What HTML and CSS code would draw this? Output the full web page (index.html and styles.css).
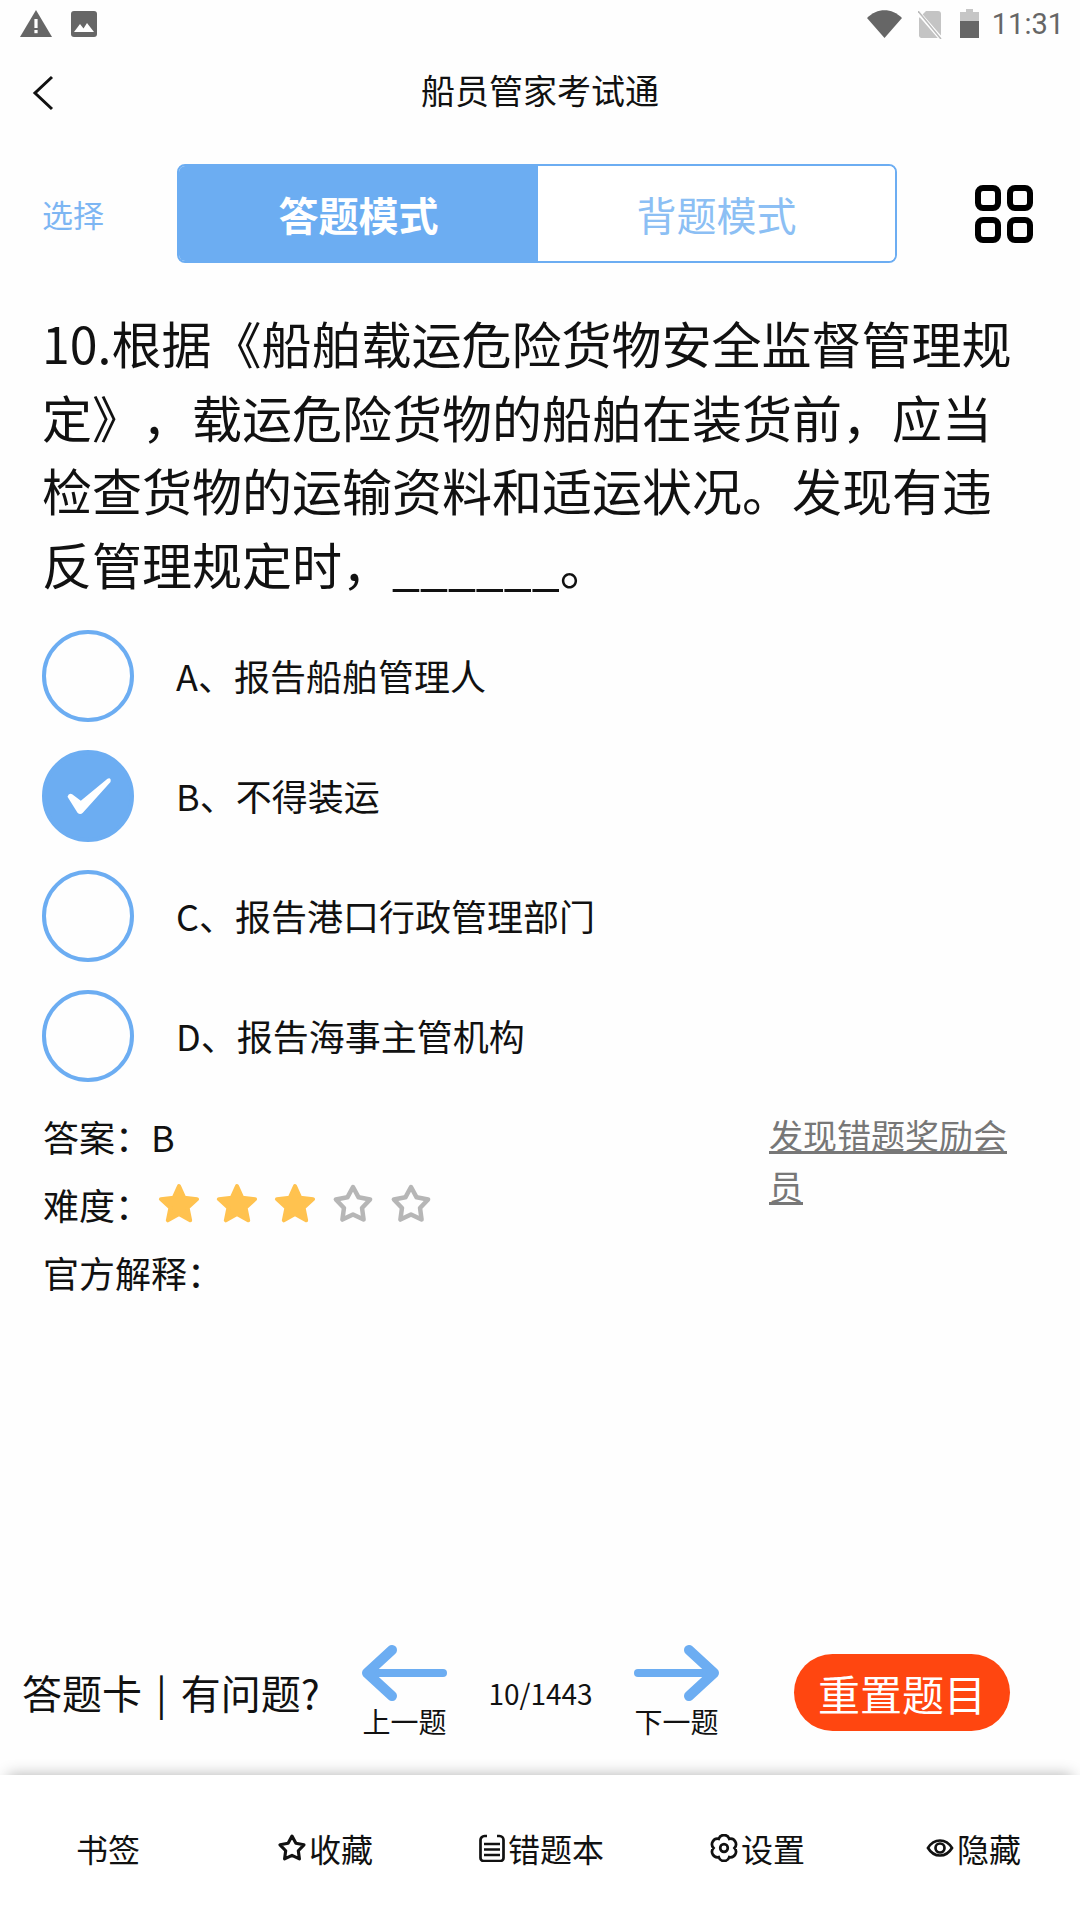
FILE: index.html
```html
<!DOCTYPE html>
<html lang="zh-CN">
<head>
<meta charset="utf-8">
<title>船员管家考试通</title>
<link rel="stylesheet" href="styles.css">
</head>
<body>
<div class="page">
  <div class="status">
    <div class="status-left">
      <svg class="ic-warn" viewBox="0 0 32 27"><path fill="#666" d="M16 0 32 27H0Z"/><rect x="14.4" y="9" width="3.2" height="9" fill="#fff"/><rect x="14.4" y="20" width="3.2" height="3.2" fill="#fff"/></svg>
      <svg class="ic-img" viewBox="0 0 26 26"><rect width="26" height="26" rx="3" fill="#666"/><path fill="#fff" d="M3 21 9 13l3.5 4.5L16 12l7 9Z"/></svg>
    </div>
    <div class="status-right">
      <svg class="ic-wifi" viewBox="0 0 35 28"><path fill="#666" d="M0 8C10-2.500 25-2.500 35 8L17.500 28Z"/></svg>
      <svg class="ic-sim" viewBox="0 0 24 28"><path fill="#c4c4c4" d="M8 0h12a3 3 0 0 1 3 3v22l-2 2H3a3 3 0 0 1-2-2V7Z"/><path stroke="#fff" stroke-width="4" d="M-1 0 25 30"/><path stroke="#bbb" stroke-width="1.500" d="M0 0 23 28"/></svg>
      <svg class="ic-bat" viewBox="0 0 19 29"><path fill="#c6c6c6" d="M6 0h7v3h6v9H0V3h6Z"/><rect y="12" width="19" height="17" fill="#666"/></svg>
      <span class="time">11:31</span>
    </div>
  </div>

  <header class="nav">
    <svg class="back" viewBox="0 0 22 36"><path d="M20 2 3 18l17 16" fill="none" stroke="#111" stroke-width="3"/></svg>
    <h1 class="title">船员管家考试通</h1>
  </header>

  <div class="modes">
    <span class="pick">选择</span>
    <div class="tabs">
      <div class="tab tab-on">答题模式</div>
      <div class="tab tab-off">背题模式</div>
    </div>
    <svg class="grid-ic" viewBox="0 0 58 58"><g fill="none" stroke="#000" stroke-width="6"><rect x="3" y="3" width="20" height="20" rx="5"/><rect x="35" y="3" width="20" height="20" rx="5"/><rect x="3" y="35" width="20" height="20" rx="5"/><rect x="35" y="35" width="20" height="20" rx="5"/></g></svg>
  </div>

  <p class="question">10.根据《船舶载运危险货物安全监督管理规定》，载运危险货物的船舶在装货前，应当检查货物的运输资料和适运状况。发现有违反管理规定时，______。</p>

  <div class="options">
    <div class="option"><span class="radio"></span><span class="opt-text">A、报告船舶管理人</span></div>
    <div class="option"><span class="radio radio-on"><svg class="check" viewBox="70 78 146 120"><path fill="#fff" d="M80 140Q84 128 94 133L120 152 200 86Q212 82 209 96L126 188Q118 196 110 188Z"/></svg></span><span class="opt-text">B、不得装运</span></div>
    <div class="option"><span class="radio"></span><span class="opt-text">C、报告港口行政管理部门</span></div>
    <div class="option"><span class="radio"></span><span class="opt-text">D、报告海事主管机构</span></div>
  </div>

  <div class="info">
    <div class="info-left">
      <div class="info-row">答案：B</div>
      <div class="info-row"><span>难度：</span><span class="stars">
          <svg class="star" viewBox="0 0 42 42"><path class="star-full" d="M21 4 26.290 15.720 39.070 17.130 29.560 25.780 32.170 38.370 21 32 9.830 38.370 12.440 25.780 2.930 17.130 15.710 15.720Z"/></svg>
          <svg class="star" viewBox="0 0 42 42"><path class="star-full" d="M21 4 26.290 15.720 39.070 17.130 29.560 25.780 32.170 38.370 21 32 9.830 38.370 12.440 25.780 2.930 17.130 15.710 15.720Z"/></svg>
          <svg class="star" viewBox="0 0 42 42"><path class="star-full" d="M21 4 26.290 15.720 39.070 17.130 29.560 25.780 32.170 38.370 21 32 9.830 38.370 12.440 25.780 2.930 17.130 15.710 15.720Z"/></svg>
          <svg class="star" viewBox="0 0 42 42"><path class="star-empty" d="M21 5 26.580 15.310 38.100 17.440 30.030 25.940 31.580 37.560 21 32.500 10.420 37.560 11.970 25.940 3.880 17.440 15.420 15.310Z"/></svg>
          <svg class="star" viewBox="0 0 42 42"><path class="star-empty" d="M21 5 26.580 15.310 38.100 17.440 30.030 25.940 31.580 37.560 21 32.500 10.420 37.560 11.970 25.940 3.880 17.440 15.420 15.310Z"/></svg>
        </span></div>
      <div class="info-row">官方解释：</div>
    </div>
    <a class="report">发现错题奖励会员</a>
  </div>

  <div class="toolbar">
    <div class="tool-left">答题卡<span class="sep">|</span>有问题?</div>
    <div class="step">
      <svg class="arrow" viewBox="0 0 87 56"><path d="M82 28H6" fill="none" stroke="#6cadf2" stroke-width="8" stroke-linecap="round"/><path d="M31 5 6 28l25 23" fill="none" stroke="#6cadf2" stroke-width="10" stroke-linecap="round" stroke-linejoin="round"/></svg>
      <span class="step-label">上一题</span>
    </div>
    <div class="count">10/1443</div>
    <div class="step">
      <svg class="arrow" viewBox="0 0 87 56"><path d="M5 28h76" fill="none" stroke="#6cadf2" stroke-width="8" stroke-linecap="round"/><path d="M56 5l25 23-25 23" fill="none" stroke="#6cadf2" stroke-width="10" stroke-linecap="round" stroke-linejoin="round"/></svg>
      <span class="step-label">下一题</span>
    </div>
    <div class="reset">重置题目</div>
  </div>

  <nav class="bottom">
    <div class="bottom-item">书签</div>
    <div class="bottom-item"><svg class="bi" viewBox="1 2 40 40"><path class="bi-star" d="M21 5 26.580 15.310 38.100 17.440 30.030 25.940 31.580 37.560 21 32.500 10.420 37.560 11.970 25.940 3.880 17.440 15.420 15.310Z"/></svg>收藏</div>
    <div class="bottom-item"><svg class="bi bi-list" viewBox="0 0 26 28"><path class="bi-line" d="M8 2H5.500a4 4 0 0 0-4 4v18a3 3 0 0 0 3 3h17a3 3 0 0 0 3-3V6a4 4 0 0 0-4-4H18M5 10h16M5 15.500h16M5 21h16"/></svg>错题本</div>
    <div class="bottom-item"><svg class="bi" viewBox="0 0 28 28"><path class="bi-line" d="M19.250 4.910A5.500 5.500 0 0 1 24.500 14 5.500 5.500 0 0 1 19.250 23.090 5.500 5.500 0 0 1 8.750 23.090 5.500 5.500 0 0 1 3.500 14 5.500 5.500 0 0 1 8.750 4.910 5.500 5.500 0 0 1 19.250 4.910Z"/><circle class="bi-line" cx="14" cy="14" r="3.800"/></svg>设置</div>
    <div class="bottom-item"><svg class="bi bi-eye" viewBox="0 0 28 22"><path class="bi-line" d="M2 11C8 1 20 1 26 11 20 21 8 21 2 11Z"/><circle class="bi-line" cx="14" cy="11" r="4.500"/></svg>隐藏</div>
  </nav>
</div>
</body>
</html>
```
FILE: styles.css
```css
* { box-sizing: border-box; }
html, body { margin: 0; padding: 0; }
body {
  background: #fefefe;
  color: #111;
  font-family: "Noto Sans CJK SC", "Noto Sans", sans-serif;
  text-spacing-trim: space-all;
  font-kerning: none;
}
.page {
  width: 1080px;
  height: 1920px;
  display: flex;
  flex-direction: column;
  overflow: hidden;
}

/* status bar */
.status {
  height: 50px;
  display: flex;
  justify-content: space-between;
  align-items: flex-start;
  padding: 9px 16px 0 20px;
}
.status-left, .status-right { display: flex; align-items: flex-start; }
.ic-warn { width: 32px; height: 27px; margin-top: 1px; }
.ic-img { width: 26px; height: 26px; margin: 2px 0 0 19px; }
.ic-wifi { width: 35px; height: 28px; margin-top: 1px; }
.ic-sim { width: 24px; height: 28px; margin: 2px 0 0 16px; }
.ic-bat { width: 19px; height: 29px; margin-left: 18px; }
.time {
  margin-left: 13px;
  font-family: Roboto, sans-serif;
  font-size: 29px;
  line-height: 30px;
  color: #666;
}

/* header */
.nav {
  height: 80px;
  margin-bottom: 4px;
  display: flex;
  align-items: center;
  justify-content: center;
  position: relative;
}
.back {
  position: absolute;
  left: 32px;
  top: 25px;
  width: 22px;
  height: 36px;
}
.title {
  margin: 0;
  font-size: 34px;
  font-weight: 400;
  line-height: 80px;
}

/* mode switch */
.modes {
  margin-top: 30px;
  height: 99px;
  display: flex;
  align-items: center;
  padding-left: 42px;
}
.pick {
  width: 135px;
  font-size: 31px;
  color: #7db6f3;
}
.tabs {
  width: 720px;
  height: 99px;
  display: flex;
  border: 2px solid #6cadf2;
  border-radius: 8px;
  overflow: hidden;
}
.tab {
  display: flex;
  align-items: center;
  justify-content: center;
  font-size: 40px;
  line-height: 50px;
}
.tab-on {
  width: 359px;
  background: #6cadf2;
  color: #fff;
  font-weight: 700;
}
.tab-off {
  flex: 1;
  background: #fff;
  color: #8cbff4;
}
.grid-ic {
  width: 58px;
  height: 58px;
  margin-left: 78px;
}

/* question */
.question {
  margin: 43px 50px 0 42px;
  font-size: 50px;
  line-height: 73.500px;
  color: #111;
}

/* options */
.options {
  margin-top: 30px;
  padding-left: 42px;
  display: flex;
  flex-direction: column;
  gap: 28px;
}
.option {
  height: 92px;
  display: flex;
  align-items: center;
  gap: 42px;
}
.radio {
  width: 92px;
  height: 92px;
  flex: none;
  border: 4px solid #6cadf2;
  border-radius: 50%;
  display: flex;
  align-items: center;
  justify-content: center;
}
.radio-on { background: #6cadf2; }
.check { width: 49px; height: 40px; }
.opt-text {
  font-size: 36px;
  line-height: 50px;
  margin-top: -3px;
  color: #111;
}

/* answer info */
.info {
  margin-top: 20px;
  padding: 0 50px 0 43px;
  display: flex;
  justify-content: space-between;
  font-size: 36px;
}
.info-row {
  height: 68px;
  display: flex;
  align-items: center;
}
.stars {
  display: flex;
  gap: 16px;
  margin: -3px 0 0 7px;
}
.star { width: 42px; height: 42px; }
.star-full {
  fill: #ffc24f;
  stroke: #ffc24f;
  stroke-width: 4;
  stroke-linejoin: round;
}
.star-empty {
  fill: none;
  stroke: #b6b6b6;
  stroke-width: 4.500;
  stroke-linejoin: round;
}
.report {
  width: 261px;
  margin-top: 7px;
  font-size: 34px;
  line-height: 51px;
  color: #777;
  text-decoration: underline;
}

/* pager */
.toolbar {
  margin-top: auto;
  margin-bottom: 12px;
  height: 140px;
  display: flex;
  align-items: center;
  padding-left: 22px;
}
.tool-left {
  width: 339px;
  font-size: 40px;
  line-height: 50px;
  margin-top: -2px;
}
.sep { margin: 0 14px; }
.step {
  width: 87px;
  display: flex;
  flex-direction: column;
  align-items: center;
}
.arrow { width: 87px; height: 56px; }
.step-label {
  font-size: 28px;
  line-height: 40px;
}
.count {
  width: 185px;
  text-align: center;
  font-size: 28px;
  line-height: 40px;
}
.reset {
  margin: -2px 0 0 74px;
  width: 216px;
  height: 77px;
  border-radius: 39px;
  background: #ff4610;
  color: #fff;
  font-size: 42px;
  display: flex;
  align-items: center;
  justify-content: center;
}

/* bottom bar */
.bottom {
  height: 145px;
  display: grid;
  grid-template-columns: repeat(5, 1fr);
  align-items: center;
  background: #fff;
  box-shadow: 0 -8px 14px -8px rgba(0, 0, 0, 0.3);
  position: relative;
}
.bottom-item {
  display: flex;
  align-items: center;
  justify-content: center;
  gap: 3px;
  font-size: 32px;
  line-height: 40px;
}
.bi { width: 28px; height: 28px; margin-left: 3px; }
.bi-list { width: 26px; }
.bi-eye { width: 28px; height: 22px; }
.bi-star { fill: none; stroke: #111; stroke-width: 4.500; stroke-linejoin: round; }
.bi-line { fill: none; stroke: #111; stroke-width: 2.700; }
```
